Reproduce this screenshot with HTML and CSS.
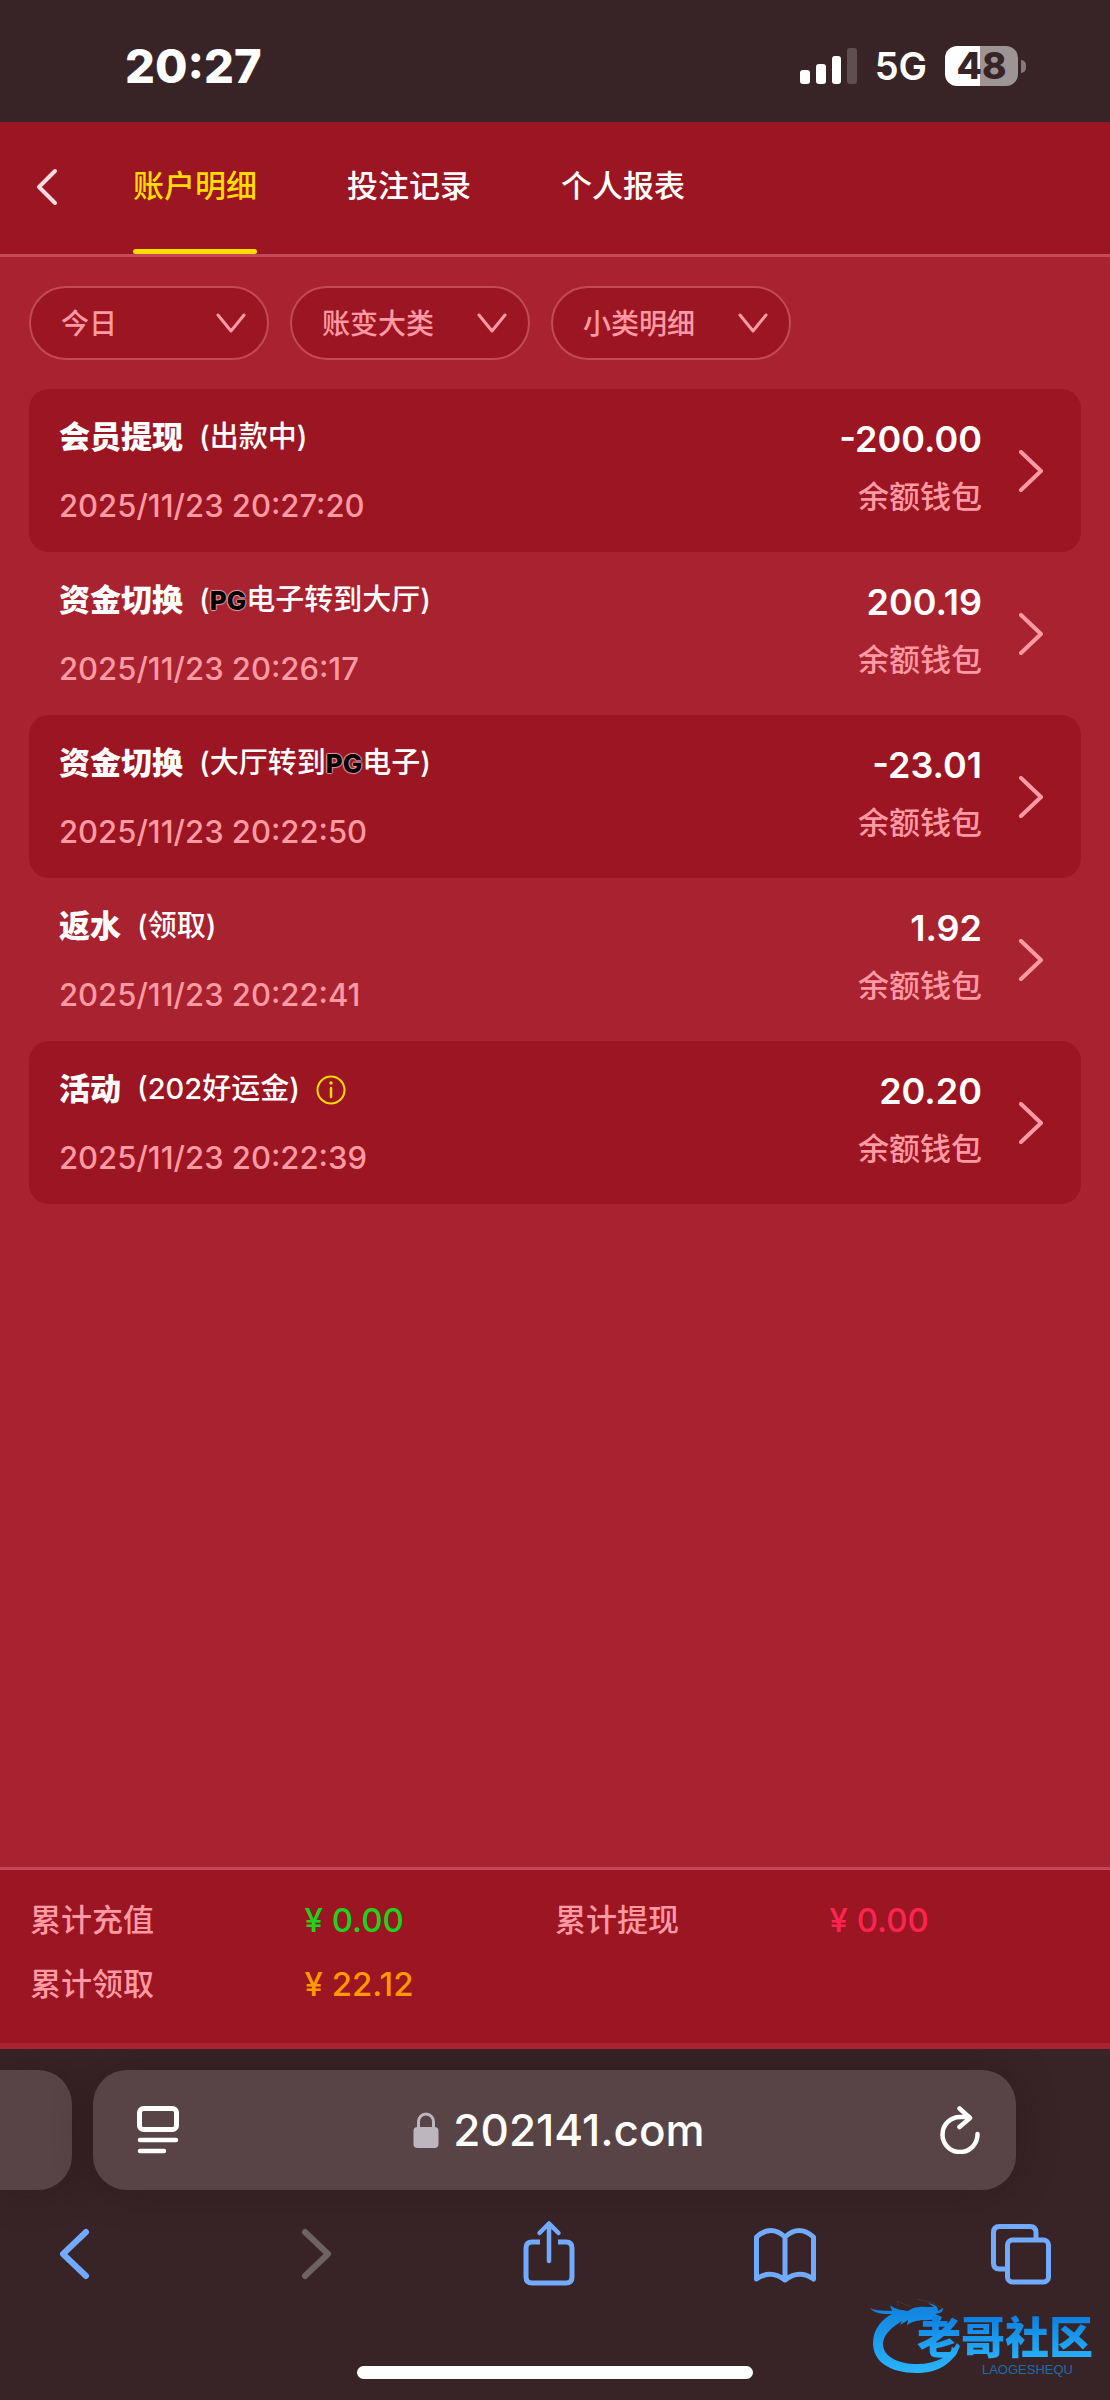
FILE: index.html
```html
<!DOCTYPE html>
<html lang="zh-CN">
<head>
    <meta charset="UTF-8">
    <meta name="viewport" content="width=device-width, initial-scale=1.0">
    <title>账户明细</title>
    <link rel="stylesheet" href="styles.css">
</head>
<body>
    <!-- 状态栏 -->
    <div class="status-bar">
        <span class="time">20:27</span>
        <div class="status-icons">
            <svg class="signal" width="57" height="36" viewBox="0 0 57 36" fill="#fff">
                <rect x="0" y="22" width="10" height="14" rx="3"/>
                <rect x="16" y="16" width="10" height="20" rx="3"/>
                <rect x="32" y="8" width="9" height="28" rx="3"/>
                <rect x="47" y="0" width="10" height="36" rx="3" opacity="0.2"/>
            </svg>
            <span class="network">5G</span>
            <div class="battery"><span>48</span></div>
        </div>
    </div>

    <!-- 顶部导航 -->
    <header class="header">
        <button class="back" aria-label="返回">
            <svg width="24" height="40" viewBox="0 0 24 40" fill="none" stroke="#ffdade" stroke-width="4" stroke-linecap="round" stroke-linejoin="round"><path d="M20 3L4 19l16 16"/></svg>
        </button>
        <nav class="tabs">
            <a href="#" class="active">账户明细</a>
            <a href="#">投注记录</a>
            <a href="#">个人报表</a>
        </nav>
    </header>

    <main class="content">
        <div class="filters">
            <div class="filter">
                <select aria-label="日期"><option>今日</option></select>
                <svg width="30" height="20" viewBox="0 0 30 20"><path d="M2 2l13 16L28 2"/></svg>
            </div>
            <div class="filter">
                <select aria-label="账变大类"><option>账变大类</option></select>
                <svg width="30" height="20" viewBox="0 0 30 20"><path d="M2 2l13 16L28 2"/></svg>
            </div>
            <div class="filter">
                <select aria-label="小类明细"><option>小类明细</option></select>
                <svg width="30" height="20" viewBox="0 0 30 20"><path d="M2 2l13 16L28 2"/></svg>
            </div>
        </div>

        <!-- 账变记录 -->
        <div class="records">
            <a href="#" class="record">
                <div class="info">
                    <div class="title"><b>会员提现</b><span>(出款中)</span></div>
                    <time>2025/11/23 20:27:20</time>
                </div>
                <div class="money"><strong>-200.00</strong><span>余额钱包</span></div>
                <svg class="arrow" width="26" height="44" viewBox="0 0 26 44"><path d="M3 2l20 19L3 40"/></svg>
            </a>
            <a href="#" class="record">
                <div class="info">
                    <div class="title"><b>资金切换</b><span>(<i class="pg">PG</i>电子转到大厅)</span></div>
                    <time>2025/11/23 20:26:17</time>
                </div>
                <div class="money"><strong>200.19</strong><span>余额钱包</span></div>
                <svg class="arrow" width="26" height="44" viewBox="0 0 26 44"><path d="M3 2l20 19L3 40"/></svg>
            </a>
            <a href="#" class="record">
                <div class="info">
                    <div class="title"><b>资金切换</b><span>(大厅转到<i class="pg">PG</i>电子)</span></div>
                    <time>2025/11/23 20:22:50</time>
                </div>
                <div class="money"><strong>-23.01</strong><span>余额钱包</span></div>
                <svg class="arrow" width="26" height="44" viewBox="0 0 26 44"><path d="M3 2l20 19L3 40"/></svg>
            </a>
            <a href="#" class="record">
                <div class="info">
                    <div class="title"><b>返水</b><span>(领取)</span></div>
                    <time>2025/11/23 20:22:41</time>
                </div>
                <div class="money"><strong>1.92</strong><span>余额钱包</span></div>
                <svg class="arrow" width="26" height="44" viewBox="0 0 26 44"><path d="M3 2l20 19L3 40"/></svg>
            </a>
            <a href="#" class="record">
                <div class="info">
                    <div class="title">
                        <b>活动</b><span>(202好运金)</span>
                        <svg class="tip" width="30" height="32" viewBox="0 0 30 32" fill="none" stroke="#ffdd00" stroke-width="2">
                            <circle cx="15" cy="17" r="13.5"/>
                            <path d="M15 15v9" stroke-width="2.5" stroke-linecap="round"/>
                            <circle cx="15" cy="10" r="1.7" fill="#ffdd00" stroke="none"/>
                        </svg>
                    </div>
                    <time>2025/11/23 20:22:39</time>
                </div>
                <div class="money"><strong>20.20</strong><span>余额钱包</span></div>
                <svg class="arrow" width="26" height="44" viewBox="0 0 26 44"><path d="M3 2l20 19L3 40"/></svg>
            </a>
        </div>
    </main>

    <!-- 累计 -->
    <footer class="summary">
        <span>累计充值</span><span class="value green">¥ 0.00</span>
        <span>累计提现</span><span class="value red">¥ 0.00</span>
        <span>累计领取</span><span class="value orange">¥ 22.12</span>
    </footer>

    <!-- 浏览器底栏 -->
    <div class="browser">
        <div class="address-row">
            <div class="prev-tab"></div>
            <div class="address">
                <button aria-label="页面菜单">
                    <svg width="42" height="48" viewBox="0 0 42 48" fill="none" stroke="#fff" stroke-linecap="round">
                        <rect x="2.5" y="2.5" width="37" height="21" rx="4" stroke-width="5"/>
                        <path d="M3 34h36M3 45h24" stroke-width="4.5"/>
                    </svg>
                </button>
                <div class="domain">
                    <svg width="26" height="36" viewBox="0 0 26 36">
                        <path d="M5.500 17V9.500a7.500 7.500 0 0 1 15 0V17" fill="none" stroke="#beb6be" stroke-width="3"/>
                        <rect x="0.500" y="15" width="25" height="21" rx="4" fill="#beb6be"/>
                    </svg>
                    <span>202141.com</span>
                </div>
                <button aria-label="刷新">
                    <svg width="42" height="48" viewBox="0 0 42 48" fill="none" stroke="#fff" stroke-width="4.5" stroke-linecap="round" stroke-linejoin="round">
                        <path d="M38.500 28A17.500 17.500 0 1 1 21 11h9"/>
                        <path d="M20.500 2.500L31 12 20.500 21"/>
                    </svg>
                </button>
            </div>
        </div>
        <nav class="toolbar">
            <button aria-label="后退">
                <svg width="60" height="66" viewBox="0 0 60 66"><path d="M41 12L18 34l23 22" stroke-width="6"/></svg>
            </button>
            <button aria-label="前进" class="disabled">
                <svg width="60" height="66" viewBox="0 0 60 66"><path d="M24 12l23 22-23 22" stroke-width="6"/></svg>
            </button>
            <button aria-label="分享">
                <svg width="60" height="66" viewBox="0 0 60 66">
                    <path d="M24 22h-8q-6 0-6 6v29q0 6 6 6h34q6 0 6-6V28q0-6-6-6h-8" stroke-linecap="butt"/>
                    <path d="M33 41V4M23.500 13L33 3.500 42.500 13" stroke-width="4.500"/>
                </svg>
            </button>
            <button aria-label="书签">
                <svg width="64" height="66" viewBox="0 0 64 66">
                    <path d="M33 17Q19 4 4.500 17v42q14-10 28.500 1 14-11 28.500-1V17Q47 4 33 17v43"/>
                </svg>
            </button>
            <button aria-label="标签页">
                <svg width="60" height="66" viewBox="0 0 60 66">
                    <path d="M14 49H8.500q-6 0-6-6V12.500q0-6 6-6H39q6 0 6 6V18" stroke-linecap="butt"/>
                    <rect x="16.500" y="20" width="41" height="42" rx="5"/>
                </svg>
            </button>
        </nav>
        <div class="home-indicator"></div>

        <!-- 社区水印 -->
        <div class="watermark">
            <svg width="100" height="80" viewBox="0 0 100 80">
                <defs>
                    <linearGradient id="blue" x1="0" y1="0" x2="0" y2="1">
                        <stop offset="0" stop-color="#0f80dc"/>
                        <stop offset="1" stop-color="#2ab4fb"/>
                    </linearGradient>
                </defs>
                <path fill="url(#blue)" d="M1 11c8 4 14 2 22 3l-2-6c6 5 12 5 18 6 8-6 16-4 26-4l-6-4c8 2 10 4 10 8l5-3c0 4-2 5-8 6l7 3-2 4c-8-3-12 0-18-1-7 1-10 2-15 5l1-5-8 5 2-4C21 31 14 39 14 47c0 12 14 20 34 20 20 0 33-8 40-21l3 3c-6 17-22 27-43 27C20 76 4 64 4 46c0-14 9-24 19-29C14 17 6 17 1 11z"/>
                <path fill="none" stroke="#4a3437" stroke-width="1" d="M29 9l-1-5 14 6M48 2l16 4 9 5"/>
            </svg>
            <div class="watermark-text">
                <b>老哥社区</b>
                <small>LAOGESHEQU</small>
            </div>
        </div>
    </div>
</body>
</html>
```
FILE: styles.css
```css
:root {
    --bg: #a82230;
    --panel: #9b1522;
    --line: #c44956;
    --pink: #ff99a3;
    --yellow: #ffdd00;
    --chrome: #382427;
    --blue: #71aaff;
}

* {
    box-sizing: border-box;
}

body {
    margin: 0;
    min-height: 100vh;
    display: flex;
    flex-direction: column;
    background: var(--bg);
    color: #fff;
    font-family: Inter, "Noto Sans CJK SC", sans-serif;
    font-size: 31px;
    font-weight: 500;
    line-height: 44px;
}

a {
    color: inherit;
    text-decoration: none;
}

button {
    display: flex;
    padding: 0;
    border: none;
    background: none;
    cursor: pointer;
}

/* 状态栏 */
.status-bar {
    display: flex;
    justify-content: space-between;
    align-items: center;
    height: 122px;
    padding: 10px 92px 0 125px;
    background: var(--chrome);
}

.time {
    font-size: 47px;
    font-weight: 800;
}

.status-icons {
    display: flex;
    align-items: center;
    gap: 18px;
}

.network {
    font-size: 38px;
    font-weight: 600;
}

.battery {
    position: relative;
    width: 73px;
    height: 40px;
    border-radius: 12px;
    background: linear-gradient(to right, #fff 48%, #9f9495 48%);
    color: var(--chrome);
    font-size: 37px;
    font-weight: 800;
    line-height: 40px;
    text-align: center;
}

.battery::after {
    content: "";
    position: absolute;
    left: 76px;
    top: 14px;
    width: 5px;
    height: 13px;
    border-radius: 0 6px 6px 0;
    background: #84787a;
}

/* 顶部导航 */
.header {
    display: flex;
    align-items: stretch;
    height: 135px;
    border-bottom: 3px solid var(--line);
    background: var(--panel);
}

.back {
    align-items: center;
    width: 133px;
    padding-left: 35px;
}

.tabs {
    display: flex;
    gap: 90px;
}

.tabs a {
    position: relative;
    line-height: 128px;
}

.tabs .active {
    color: var(--yellow);
}

.tabs .active::after {
    content: "";
    position: absolute;
    left: 0;
    right: 0;
    bottom: 0;
    height: 5px;
    border-radius: 3px;
    background: var(--yellow);
}

/* 筛选 */
.content {
    flex: 1;
    padding: 29px 29px 40px;
}

.filters {
    display: flex;
    gap: 21px;
    margin-bottom: 29px;
}

.filter {
    position: relative;
    width: 240px;
}

.filter select {
    display: block;
    width: 100%;
    height: 74px;
    padding: 2px 60px 0 30px;
    appearance: none;
    border: 2px solid var(--line);
    border-radius: 37px;
    background: var(--panel);
    color: var(--pink);
    font: inherit;
    font-size: 28px;
}

.filter svg {
    position: absolute;
    right: 23px;
    top: 27px;
    pointer-events: none;
    fill: none;
    stroke: var(--pink);
    stroke-width: 3;
    stroke-linecap: round;
    stroke-linejoin: round;
}

/* 记录列表 */
.record {
    display: flex;
    padding: 26px 37px 24px 30px;
    border-radius: 20px;
}

.record:nth-child(odd) {
    background: var(--panel);
}

.info {
    flex: 1;
    display: flex;
    flex-direction: column;
    gap: 25px;
}

.title {
    display: flex;
    align-items: center;
    gap: 16px;
    height: 44px;
}

.title b {
    font-weight: 900;
}

.title span {
    font-size: 29px;
}

.pg {
    color: #000;
    font-size: 26px;
    font-style: normal;
    font-weight: 800;
    text-shadow: 1px 0 1px #e0a0a6, -1px 0 1px #e0a0a6, 0 1px 1px #e0a0a6, 0 -1px 1px #e0a0a6;
}

time {
    color: var(--pink);
    font-size: 31px;
}

.money {
    display: flex;
    flex-direction: column;
    align-items: flex-end;
    gap: 14px;
    padding-top: 2px;
    color: var(--pink);
}

.money strong {
    color: #fff;
    font-size: 36px;
    font-weight: 600;
}

.arrow {
    align-self: center;
    margin-left: 36px;
    fill: none;
    stroke: var(--pink);
    stroke-width: 4;
    stroke-linecap: round;
    stroke-linejoin: round;
}

/* 累计 */
.summary {
    display: grid;
    grid-template-columns: repeat(4, 1fr);
    row-gap: 20px;
    padding: 28px 30px 37px;
    margin-bottom: 6px;
    border-top: 3px solid var(--line);
    background: var(--panel);
    color: var(--pink);
}

.value {
    padding-left: 12px;
    font-size: 33px;
}

.green {
    color: #1dd41d;
}

.red {
    color: #ff2450;
}

.orange {
    color: #ff9900;
}

/* 浏览器底栏 */
.browser {
    position: relative;
    overflow: hidden;
    padding-top: 21px;
    background: var(--chrome);
}

.address-row {
    display: flex;
    gap: 21px;
    padding-right: 94px;
}

.prev-tab,
.address {
    height: 120px;
    background: #584446;
    box-shadow: 0 0 40px rgba(30, 10, 12, 0.3);
}

.prev-tab {
    width: 72px;
    border-radius: 0 34px 34px 0;
}

.address {
    flex: 1;
    display: flex;
    justify-content: space-between;
    align-items: center;
    padding: 0 35px 0 44px;
    border-radius: 34px;
}

.domain {
    display: flex;
    align-items: center;
    gap: 14px;
    font-size: 44px;
}

.toolbar {
    display: flex;
    justify-content: space-between;
    margin-top: 30px;
    padding: 0 59px 0 45px;
}

.toolbar svg {
    fill: none;
    stroke: var(--blue);
    stroke-width: 5;
    stroke-linecap: round;
    stroke-linejoin: round;
}

.toolbar .disabled svg {
    stroke: #6f6264;
}

.home-indicator {
    width: 396px;
    height: 13px;
    margin: 80px auto 21px;
    border-radius: 7px;
    background: #fff;
}

/* 水印 */
.watermark {
    position: absolute;
    right: 17px;
    bottom: 22px;
    display: flex;
}

.watermark svg {
    flex: none;
    margin-right: -52px;
}

.watermark-text {
    display: flex;
    flex-direction: column;
    align-items: flex-end;
    padding-top: 17px;
}

.watermark-text b {
    background: linear-gradient(#0b7de0, #2ab4fb);
    -webkit-background-clip: text;
    background-clip: text;
    color: transparent;
    font-size: 44px;
    font-weight: 900;
    line-height: 48px;
}

.watermark-text small {
    padding-right: 20px;
    color: #1b6cab;
    font-family: "Liberation Sans", sans-serif;
    font-size: 13px;
    line-height: 16px;
}
```
